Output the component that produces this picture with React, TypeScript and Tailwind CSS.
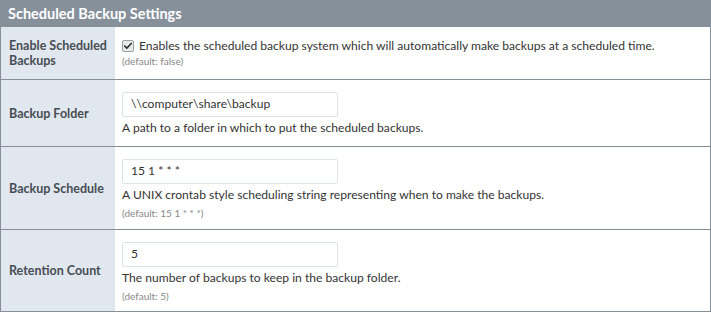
import { Check } from "lucide-react";

type Row = {
  label: string;
  value?: string;
  desc: string;
  def?: string;
  checkbox?: boolean;
  h: string;
};

const rows: Row[] = [
  {
    label: "Enable Scheduled Backups",
    checkbox: true,
    desc: "Enables the scheduled backup system which will automatically make backups at a scheduled time.",
    def: "(default: false)",
    h: "h-[53px]",
  },
  {
    label: "Backup Folder",
    value: "\\\\computer\\share\\backup",
    desc: "A path to a folder in which to put the scheduled backups.",
    h: "h-[67px]",
  },
  {
    label: "Backup Schedule",
    value: "15 1 * * *",
    desc: "A UNIX crontab style scheduling string representing when to make the backups.",
    def: "(default: 15 1 * * *)",
    h: "h-[83px]",
  },
  {
    label: "Retention Count",
    value: "5",
    desc: "The number of backups to keep in the backup folder.",
    def: "(default: 5)",
    h: "h-[82px]",
  },
];

export default function App() {
  return (
    <div
      className="w-[711px] h-[312px] bg-white overflow-hidden"
      style={{ fontFamily: "Lato, 'Open Sans', sans-serif" }}
    >
      <div className="h-[27px] bg-[#86909b] text-white font-bold text-[14.5px] px-2 flex items-center">
        Scheduled Backup Settings
      </div>
      <div className="border-x border-[#86909b]">
        {rows.map((r) => (
          <div key={r.label} className={`flex border-b border-[#86909b] ${r.h}`}>
            <div className="w-[114px] shrink-0 bg-[#e1e7ee] pl-2 pr-1 flex items-center text-[12.5px] font-bold text-[#474d54] leading-[15px]">
              {r.label}
            </div>
            <div className={`flex-1 px-[7px] ${r.checkbox ? "pt-[10px]" : "pt-3"}`}>
              {r.checkbox ? (
                <div className="flex items-center gap-[5px] text-[12.1px] text-[#333] leading-[17px]">
                  <span className="w-[12px] h-[12px] rounded-[2px] border border-[#9aa0a6] bg-[#e9e9e9] flex items-center justify-center">
                    <Check className="w-[10px] h-[10px] text-[#333]" strokeWidth={4} />
                  </span>
                  {r.desc}
                </div>
              ) : (
                <>
                  <div className="w-[216px] h-[25px] border border-[#dde3e9] rounded-[2px] px-2 flex items-center text-[12.1px] text-[#333]">
                    {r.value}
                  </div>
                  <div className="text-[12.1px] text-[#333] leading-[17px] mt-[2px]">
                    {r.desc}
                  </div>
                </>
              )}
              {r.def && (
                <div
                  className={`text-[10px] text-[#888] leading-[14px] ${r.checkbox ? "" : "mt-[3px]"}`}
                >
                  {r.def}
                </div>
              )}
            </div>
          </div>
        ))}
      </div>
    </div>
  );
}
